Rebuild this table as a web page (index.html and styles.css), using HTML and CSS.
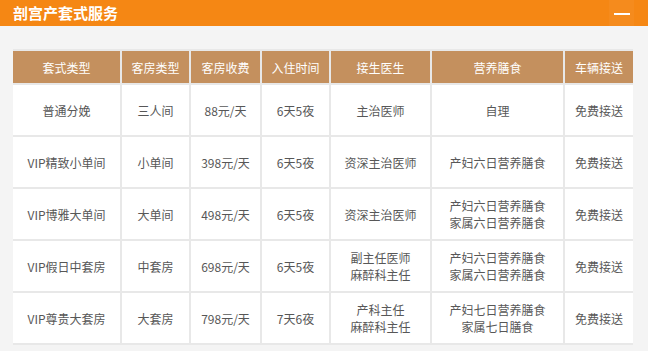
FILE: index.html
```html
<!DOCTYPE html>
<html lang="zh">
<head>
<meta charset="utf-8">
<title>剖宫产套式服务</title>
<link rel="stylesheet" href="styles.css">
</head>
<body>
<div class="bar">
  <h1 class="title">剖宫产套式服务</h1>
  <span class="toggle"><span class="dash"></span></span>
</div>
<div class="table">
  <div class="th">套式类型</div><div class="th">客房类型</div><div class="th">客房收费</div><div class="th">入住时间</div><div class="th">接生医生</div><div class="th">营养膳食</div><div class="th">车辆接送</div>

  <div class="td">普通分娩</div><div class="td">三人间</div><div class="td">88元/天</div><div class="td">6天5夜</div><div class="td">主治医师</div><div class="td">自理</div><div class="td">免费接送</div>

  <div class="td">VIP精致小单间</div><div class="td">小单间</div><div class="td">398元/天</div><div class="td">6天5夜</div><div class="td">资深主治医师</div><div class="td">产妇六日营养膳食</div><div class="td">免费接送</div>

  <div class="td">VIP博雅大单间</div><div class="td">大单间</div><div class="td">498元/天</div><div class="td">6天5夜</div><div class="td">资深主治医师</div><div class="td">产妇六日营养膳食<br>家属六日营养膳食</div><div class="td">免费接送</div>

  <div class="td">VIP假日中套房</div><div class="td">中套房</div><div class="td">698元/天</div><div class="td">6天5夜</div><div class="td">副主任医师<br>麻醉科主任</div><div class="td">产妇六日营养膳食<br>家属六日营养膳食</div><div class="td">免费接送</div>

  <div class="td">VIP尊贵大套房</div><div class="td">大套房</div><div class="td">798元/天</div><div class="td">7天6夜</div><div class="td">产科主任<br>麻醉科主任</div><div class="td">产妇七日营养膳食<br>家属七日膳食</div><div class="td">免费接送</div>
</div>
</body>
</html>
```
FILE: styles.css
```css
html, body {
  margin: 0;
  padding: 0;
}
body {
  background: #f4f4f4;
  font-family: "Noto Sans CJK SC", "Liberation Sans", sans-serif;
  width: 648px;
  height: 351px;
  overflow: hidden;
}
.bar {
  height: 26px;
  background: #f58714;
  display: flex;
  align-items: center;
  justify-content: space-between;
  padding-left: 13px;
}
.title {
  margin: 0;
  font-size: 15px;
  font-weight: bold;
  color: #fff;
  line-height: 26px;
}
.toggle {
  width: 25px;
  height: 26px;
  margin-right: 14px;
  background: rgba(255, 255, 255, 0.04);
  display: flex;
  align-items: center;
  justify-content: center;
  padding-top: 1px;
  box-sizing: border-box;
}
.dash {
  display: block;
  width: 16px;
  height: 2px;
  background: #fff;
}
.table {
  margin: 23px 0 0 13px;
  width: 620px;
  background: #e8e8e8;
  padding: 2px 0;
  display: grid;
  grid-template-columns: 107px 67px 69px 67px 99px 131px 68px;
  grid-template-rows: 32px repeat(5, 50px);
  gap: 2px;
}
.th, .td {
  display: flex;
  align-items: center;
  justify-content: center;
  text-align: center;
  font-size: 12px;
  line-height: 17px;
}
.th {
  background: #c4905e;
  color: #fff;
}
.td {
  background: #fff;
  color: #575757;
}
```
